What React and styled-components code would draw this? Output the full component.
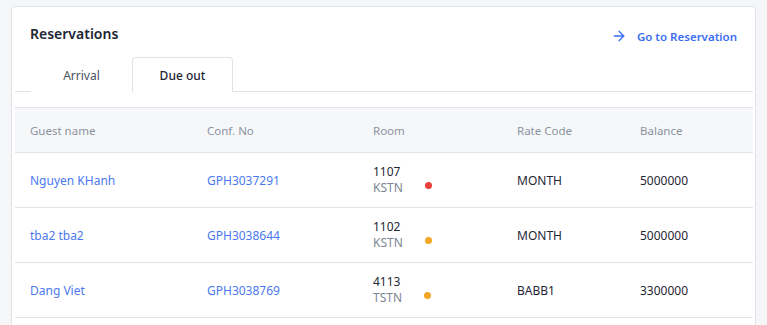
import React from "react";
import styled, { createGlobalStyle } from "styled-components";
import { ArrowRight } from "lucide-react";

const GlobalStyle = createGlobalStyle`
  body {
    margin: 0;
    background: #f5f6f8;
    font-family: "Noto Sans", "Liberation Sans", sans-serif;
  }
`;

const Page = styled.div`
  padding: 6px 11px 0 11px;
  height: 325px;
  box-sizing: border-box;
  overflow: hidden;
`;

const Card = styled.div`
  background: #fff;
  border: 1px solid #e1e3e8;
  border-radius: 4px;
  padding: 0 2px 0 3px;
  height: 400px;
`;

const Header = styled.div`
  display: flex;
  align-items: center;
  justify-content: space-between;
  padding: 16px 15px 0 15px;
  height: 21px;
`;

const Title = styled.h2`
  margin: 0;
  font-size: 14px;
  font-weight: 600;
  color: #1c2433;
`;

const GoLink = styled.a`
  display: flex;
  align-items: center;
  gap: 10px;
  color: #3b6ef3;
  font-size: 11.5px;
  font-weight: 600;
  text-decoration: none;
  cursor: pointer;
  margin-top: 5px;
  margin-right: 1px;
`;

const Tabs = styled.div`
  display: flex;
  margin-top: 13px;
  padding-left: 16px;
  border-bottom: 1px solid #e1e3e8;
`;

const Tab = styled.div`
  box-sizing: border-box;
  width: 101px;
  height: 35px;
  display: flex;
  align-items: center;
  justify-content: center;
  font-size: 12px;
  color: ${(p) => (p.active ? "#1c2433" : "#4a5262")};
  font-weight: ${(p) => (p.active ? 500 : 400)};
  border: 1px solid ${(p) => (p.active ? "#e1e3e8" : "transparent")};
  border-bottom: none;
  border-radius: 4px 4px 0 0;
  background: #fff;
  margin-bottom: -1px;
  position: relative;
  z-index: 1;
`;

const Table = styled.div`
  margin-top: 15px;
  border-top: 1px solid #e1e3e8;
`;

const Row = styled.div`
  display: grid;
  grid-template-columns: 177px 166px 144px 123px 1fr;
  align-items: center;
  padding-left: 15px;
  height: ${(p) => (p.head ? "44px" : "54px")};
  background: ${(p) => (p.head ? "#f6f7f9" : "#fff")};
  border-bottom: 1px solid #e1e3e8;
`;

const HeadCell = styled.div`
  font-size: 11.5px;
  color: #8b93a1;
`;

const Cell = styled.div`
  font-size: 12px;
  color: ${(p) => (p.link ? "#4c79ef" : "#1f2735")};
  cursor: ${(p) => (p.link ? "pointer" : "default")};
`;

const RoomCell = styled.div`
  display: flex;
  align-items: center;
  gap: 22px;
`;

const RoomText = styled.div`
  display: flex;
  flex-direction: column;
  gap: 2px;
  font-size: 12px;
  line-height: 14px;
  color: #1f2735;
  span {
    color: #7d8594;
  }
`;

const Dot = styled.span`
  width: 7px;
  height: 7px;
  border-radius: 50%;
  background: ${(p) => p.color};
  margin-top: 10px;
`;

const rows = [
  { name: "Nguyen KHanh", conf: "GPH3037291", room: "1107", type: "KSTN", dot: "#e8403a", rate: "MONTH", balance: "5000000" },
  { name: "tba2 tba2", conf: "GPH3038644", room: "1102", type: "KSTN", dot: "#f2a623", rate: "MONTH", balance: "5000000" },
  { name: "Dang Viet", conf: "GPH3038769", room: "4113", type: "TSTN", dot: "#f2a623", rate: "BABB1", balance: "3300000" },
];

export default function App() {
  return (
    <>
      <GlobalStyle />
      <Page>
        <Card>
          <Header>
            <Title>Reservations</Title>
            <GoLink>
              <ArrowRight size={16} strokeWidth={2} />
              Go to Reservation
            </GoLink>
          </Header>
          <Tabs>
            <Tab>Arrival</Tab>
            <Tab active>Due out</Tab>
          </Tabs>
          <Table>
            <Row head>
              <HeadCell>Guest name</HeadCell>
              <HeadCell>Conf. No</HeadCell>
              <HeadCell>Room</HeadCell>
              <HeadCell>Rate Code</HeadCell>
              <HeadCell>Balance</HeadCell>
            </Row>
            {rows.map((r) => (
              <Row key={r.conf}>
                <Cell link>{r.name}</Cell>
                <Cell link>{r.conf}</Cell>
                <RoomCell>
                  <RoomText>
                    {r.room}
                    <span>{r.type}</span>
                  </RoomText>
                  <Dot color={r.dot} />
                </RoomCell>
                <Cell>{r.rate}</Cell>
                <Cell>{r.balance}</Cell>
              </Row>
            ))}
          </Table>
        </Card>
      </Page>
    </>
  );
}
